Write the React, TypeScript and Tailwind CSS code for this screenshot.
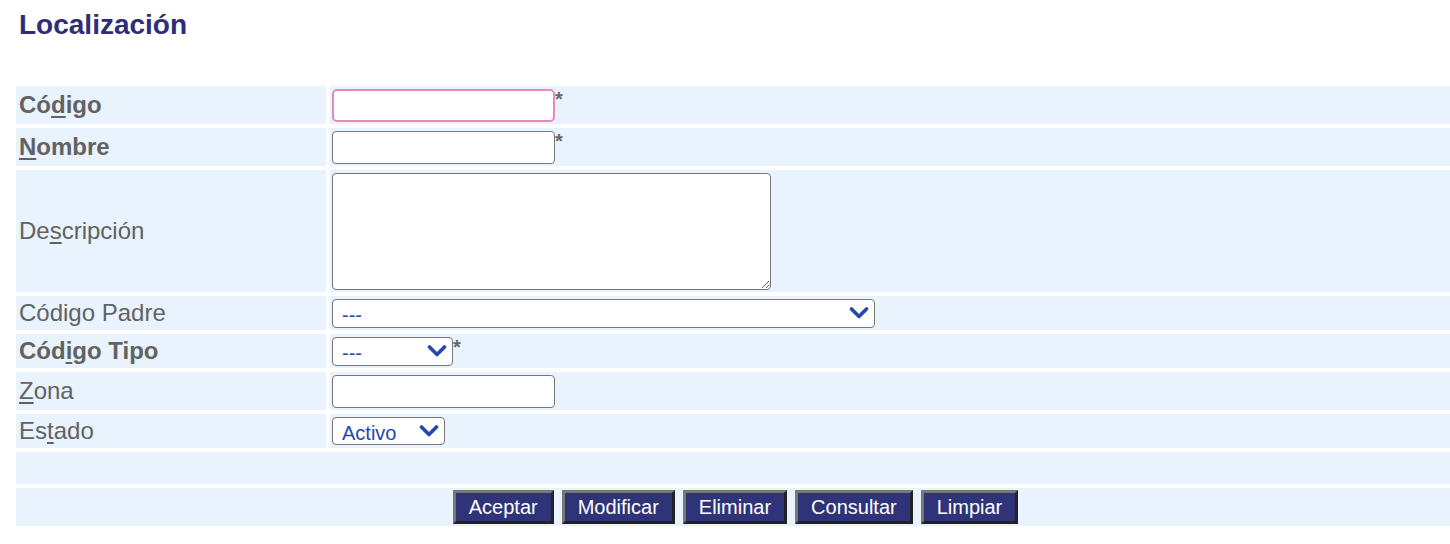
import React from "react";

const font = { fontFamily: '"Liberation Sans", Arial, Helvetica, sans-serif' };

function Chevron() {
  return (
    <svg width="20" height="14" viewBox="0 0 20 14" className="pointer-events-none">
      <path d="M2.5 3 L10 10.5 L17.5 3" fill="none" stroke="#2447b0" strokeWidth="3.6" strokeLinecap="round" strokeLinejoin="round" />
    </svg>
  );
}

function Select({ w, h, value }: { w: string; h: string; value: string }) {
  return (
    <div className={`relative ${w} ${h}`}>
      <select
        defaultValue={value}
        className="appearance-none w-full h-full bg-white border border-[#767676] rounded-[4px] pl-[9px] text-[20px] text-[#2447b0] outline-none"
        style={font}
      >
        <option value={value}>{value}</option>
      </select>
      <div className="absolute right-[6px] top-0 h-full flex items-center">
        <Chevron />
      </div>
    </div>
  );
}

function Star() {
  return <span className="self-start text-[20px] leading-none font-bold text-[#666] mt-[3px]">*</span>;
}

function Label({ children, bold }: { children: React.ReactNode; bold?: boolean }) {
  return (
    <div className={`w-[310px] shrink-0 bg-[#e9f3fd] flex items-center pl-[3px] text-[24px] text-[#626262] ${bold ? "font-bold" : ""}`}>
      <span>{children}</span>
    </div>
  );
}

function Row({ h, label, bold, children }: { h: string; label: React.ReactNode; bold?: boolean; children: React.ReactNode }) {
  return (
    <div className={`flex gap-1 ${h}`}>
      <Label bold={bold}>{label}</Label>
      <div className="flex-1 bg-[#e9f3fd] flex items-center pl-[2px]">{children}</div>
    </div>
  );
}

const U = ({ children }: { children: React.ReactNode }) => <span className="underline underline-offset-[3px]">{children}</span>;

function Btn({ children }: { children: React.ReactNode }) {
  return (
    <button
      className="h-[34px] px-[13px] bg-[#2f3479] text-white text-[20px] leading-none border-[3px] border-t-[#777] border-l-[#777] border-r-[#222] border-b-[#222]"
      style={font}
    >
      {children}
    </button>
  );
}

export default function App() {
  return (
    <div className="w-[1450px] h-[544px] bg-white" style={font}>
      <h1 className="pl-[19px] pt-[9px] text-[28px] leading-[32px] font-bold text-[#2d2e78]">Localización</h1>
      <div className="ml-4 mt-[45px] flex flex-col gap-1">
        <Row h="h-[38px]" bold label={<>Có<U>d</U>igo</>}>
          <input className="w-[223px] h-[33px] bg-white border-[2.5px] border-[#e88ab4] rounded-[5px] outline-none" />
          <Star />
        </Row>
        <Row h="h-[38px]" bold label={<><U>N</U>ombre</>}>
          <input className="w-[223px] h-[33px] bg-white border border-[#767676] rounded-[4px] outline-none" />
          <Star />
        </Row>
        <Row h="h-[122px]" label={<>De<U>s</U>cripción</>}>
          <textarea className="w-[439px] h-[117px] bg-white border border-[#767676] rounded-[4px] outline-none" />
        </Row>
        <Row h="h-[34px]" label="Código Padre">
          <Select w="w-[543px]" h="h-[29px]" value="---" />
        </Row>
        <Row h="h-[34px]" bold label={<>Cód<U>i</U>go Tipo</>}>
          <Select w="w-[121px]" h="h-[29px]" value="---" />
          <Star />
        </Row>
        <Row h="h-[38px]" label={<><U>Z</U>ona</>}>
          <input className="w-[223px] h-[33px] bg-white border border-[#767676] rounded-[4px] outline-none" />
        </Row>
        <Row h="h-[34px]" label={<>Es<U>t</U>ado</>}>
          <Select w="w-[113px]" h="h-[28px]" value="Activo" />
        </Row>
        <div className="h-[32px] bg-[#e9f3fd]" />
        <div className="h-[38px] bg-[#e9f3fd] flex items-center justify-center gap-[8px] pl-[5px]">
          <Btn>Aceptar</Btn>
          <Btn>Modificar</Btn>
          <Btn>Eliminar</Btn>
          <Btn>Consultar</Btn>
          <Btn>Limpiar</Btn>
        </div>
      </div>
    </div>
  );
}
